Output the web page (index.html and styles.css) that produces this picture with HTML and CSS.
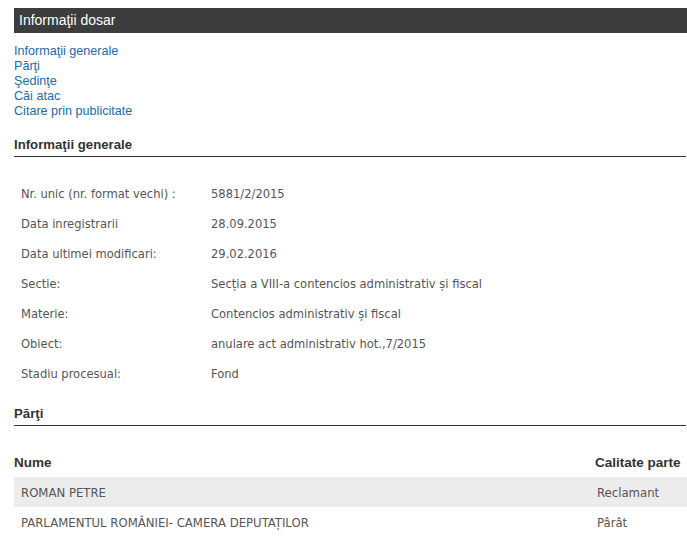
FILE: index.html
```html
<!doctype html>
<html lang="ro">
<head>
    <meta charset="UTF-8">
    <title>Informaţii dosar</title>
    <link rel="stylesheet" href="styles.css">
</head>
<body>

<div class="dosar">
    <h1 class="bar">Informaţii dosar</h1>

    <ul class="nav">
        <li><a href="#generale">Informaţii generale</a></li>
        <li><a href="#parti">Părţi</a></li>
        <li><a href="#sedinte">Şedinţe</a></li>
        <li><a href="#cai">Căi atac</a></li>
        <li><a href="#citare">Citare prin publicitate</a></li>
    </ul>

    <h2 id="generale" class="section">Informaţii generale</h2>

    <table class="info">
        <tr><td class="label">Nr. unic (nr. format vechi) :</td><td>5881/2/2015</td></tr>
        <tr><td class="label">Data inregistrarii</td><td>28.09.2015</td></tr>
        <tr><td class="label">Data ultimei modificari:</td><td>29.02.2016</td></tr>
        <tr><td class="label">Sectie:</td><td>Secția a VIII-a contencios administrativ și fiscal</td></tr>
        <tr><td class="label">Materie:</td><td>Contencios administrativ și fiscal</td></tr>
        <tr><td class="label">Obiect:</td><td>anulare act administrativ hot.,7/2015</td></tr>
        <tr><td class="label">Stadiu procesual:</td><td>Fond</td></tr>
    </table>

    <h2 id="parti" class="section">Părţi</h2>

    <table class="parti">
        <thead>
            <tr><th>Nume</th><th class="calitate">Calitate parte</th></tr>
        </thead>
        <tbody>
            <tr class="odd"><td>ROMAN PETRE</td><td class="calitate">Reclamant</td></tr>
            <tr><td>PARLAMENTUL ROMÂNIEI- CAMERA DEPUTAȚILOR</td><td class="calitate">Pârât</td></tr>
        </tbody>
    </table>
</div>

</body>
</html>
```

FILE: styles.css
```css
body {
    margin: 8px 0 0 14px;
    font-family: "Liberation Sans", Arial, sans-serif;
    color: #333;
    background: #fff;
}
.bar {
    margin: 0;
    height: 25px;
    line-height: 25px;
    padding-left: 5px;
    background-color: #3d3d3d;
    color: #fff;
    font-size: 14px;
    font-weight: normal;
}
.nav {
    list-style: none;
    margin: 11px 0 0;
    padding: 0;
    font-size: 12.6px;
    line-height: 15px;
}
.nav a {
    color: #1e6ba5;
    text-decoration: none;
}
.section {
    margin: 18px 1px 0 0;
    padding-bottom: 3px;
    border-bottom: 1px solid #333;
    font-size: 13.2px;
    font-weight: bold;
    line-height: 16px;
    color: #333;
}
.info + .section {
    margin-top: 18px;
}
table {
    border-collapse: collapse;
    width: 100%;
}
.info {
    margin-top: 21px;
    font-family: "DejaVu Sans Condensed", "DejaVu Sans", sans-serif;
    font-size: 12.8px;
    color: #555;
}
.info td {
    height: 30px;
    padding: 0;
    vertical-align: middle;
}
.info td.label {
    width: 190px;
    padding-left: 7px;
}
.parti {
    margin-top: 21px;
}
.parti th {
    height: 30px;
    padding: 0;
    text-align: left;
    font-size: 13.5px;
    font-weight: bold;
    color: #333;
}
.parti td {
    height: 30px;
    padding: 0 0 0 7px;
    font-family: "DejaVu Sans Condensed", "DejaVu Sans", sans-serif;
    font-size: 13px;
    color: #555;
}
.parti .calitate {
    width: 90px;
}
.parti td.calitate {
    padding-left: 2px;
}
.parti tr.odd td {
    background-color: #ececec;
}
```
